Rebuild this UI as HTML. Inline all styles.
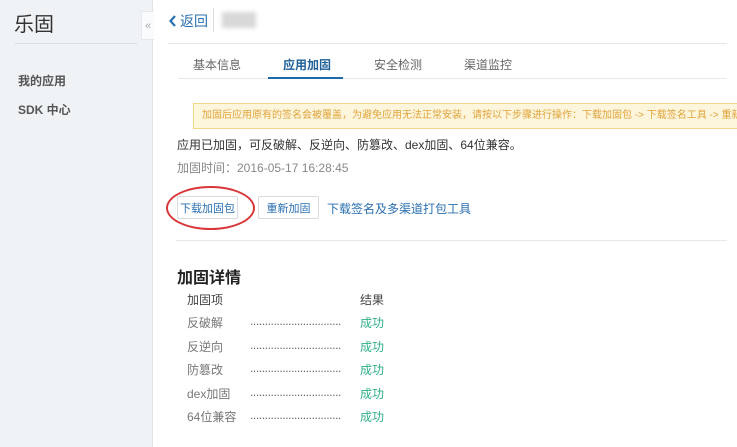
<!DOCTYPE html>
<html><head><meta charset="utf-8"><style>
*{margin:0;padding:0;box-sizing:border-box}
body{width:737px;height:447px;overflow:hidden;background:#fff;font-family:"Liberation Sans","Noto Sans CJK SC",sans-serif;position:relative;color:#333}
.a{position:absolute;white-space:nowrap}
#side{left:0;top:0;width:153px;height:447px;background:#eff3f6;border-right:1px solid #dfe4e8}
.c{color:#777;font-size:12px}
.dots{color:#666;font-size:12px;letter-spacing:-0.4px}
.ok{color:#2fae8a;font-size:12px}
.btn{height:23px;border:1px solid #d5dbe0;border-radius:2px;background:#fff;color:#2a6fb0;font-size:11px;display:flex;align-items:center;justify-content:center}
</style></head><body>
<div class="a" id="side"></div>
<div class="a" style="left:14px;top:8px;font-size:20px;color:#333">乐固</div>
<div class="a" style="left:15px;top:43px;width:122px;height:1px;background:#d9dee3"></div>
<div class="a" style="left:18px;top:72px;font-size:12px;font-weight:bold;color:#555">我的应用</div>
<div class="a" style="left:18px;top:101px;font-size:12px;font-weight:bold;color:#555">SDK 中心</div>
<div class="a" style="left:141px;top:11px;width:13px;height:29px;background:#fafbfc;border:1px solid #e5e8ec;border-right:none;color:#aaa;font-size:11px;display:flex;align-items:center;justify-content:center">«</div>
<svg class="a" style="left:169px;top:15px" width="8" height="12" viewBox="0 0 8 12"><path d="M6 1L1.5 6L6 11" stroke="#2a6fb0" stroke-width="2.2" fill="none"/></svg>
<div class="a" style="left:180px;top:11px;font-size:14px;color:#2a6fb0">返回</div>
<div class="a" style="left:213px;top:8px;width:1px;height:24px;background:#ddd"></div>
<div class="a" style="left:222px;top:12px;width:34px;height:16px;background:#d8d8d8;filter:blur(2px)"></div>
<div class="a" style="left:168px;top:43px;width:559px;height:1px;background:#e3e6ea"></div>
<div class="a" style="left:193px;top:56px;font-size:12px;color:#666">基本信息</div>
<div class="a" style="left:283px;top:56px;font-size:12px;color:#1e5f98;font-weight:bold">应用加固</div>
<div class="a" style="left:374px;top:56px;font-size:12px;color:#666">安全检测</div>
<div class="a" style="left:464px;top:56px;font-size:12px;color:#666">渠道监控</div>
<div class="a" style="left:178px;top:78px;width:549px;height:1px;background:#e6e9ec"></div>
<div class="a" style="left:268px;top:77px;width:75px;height:2px;background:#1f6aa8"></div>
<div class="a" style="left:193px;top:103px;width:544px;height:26px;background:#fdf5dc;border:1px solid #f0d88e;border-right:none;font-size:10px;color:#e0a43a;line-height:24px;padding-left:8px;overflow:hidden">加固后应用原有的签名会被覆盖，为避免应用无法正常安装，请按以下步骤进行操作：下载加固包 -&gt; 下载签名工具 -&gt; 重新签名</div>
<div class="a" style="left:177px;top:136px;font-size:12px;color:#333">应用已加固，可反破解、反逆向、防篡改、dex加固、64位兼容。</div>
<div class="a" style="left:177px;top:159px;font-size:12px;color:#888">加固时间：2016-05-17 16:28:45</div>
<div class="a btn" style="left:177px;top:196px;width:61px">下载加固包</div>
<div class="a btn" style="left:258px;top:196px;width:61px">重新加固</div>
<div class="a" style="left:327px;top:200px;font-size:12px;color:#2a6fb0">下载签名及多渠道打包工具</div>
<div class="a" style="left:166px;top:186px;width:89px;height:44px;border:2px solid #d9363a;border-radius:50%"></div>
<div class="a" style="left:176px;top:240px;width:551px;height:1px;background:#e6e9ec"></div>
<div class="a" style="left:177px;top:264px;font-size:16px;font-weight:bold;color:#222">加固详情</div>
<div class="a" style="left:187px;top:291px;font-size:12px;color:#444">加固项</div>
<div class="a" style="left:360px;top:291px;font-size:12px;color:#444">结果</div>
<div class="a c" style="left:187px;top:314px">反破解</div><div class="a dots" style="left:250px;top:314px">...............................</div><div class="a ok" style="left:360px;top:314px">成功</div>
<div class="a c" style="left:187px;top:338px">反逆向</div><div class="a dots" style="left:250px;top:338px">...............................</div><div class="a ok" style="left:360px;top:338px">成功</div>
<div class="a c" style="left:187px;top:361px">防篡改</div><div class="a dots" style="left:250px;top:361px">...............................</div><div class="a ok" style="left:360px;top:361px">成功</div>
<div class="a c" style="left:187px;top:385px">dex加固</div><div class="a dots" style="left:250px;top:385px">...............................</div><div class="a ok" style="left:360px;top:385px">成功</div>
<div class="a c" style="left:187px;top:408px">64位兼容</div><div class="a dots" style="left:250px;top:408px">...............................</div><div class="a ok" style="left:360px;top:408px">成功</div>
</body></html>
